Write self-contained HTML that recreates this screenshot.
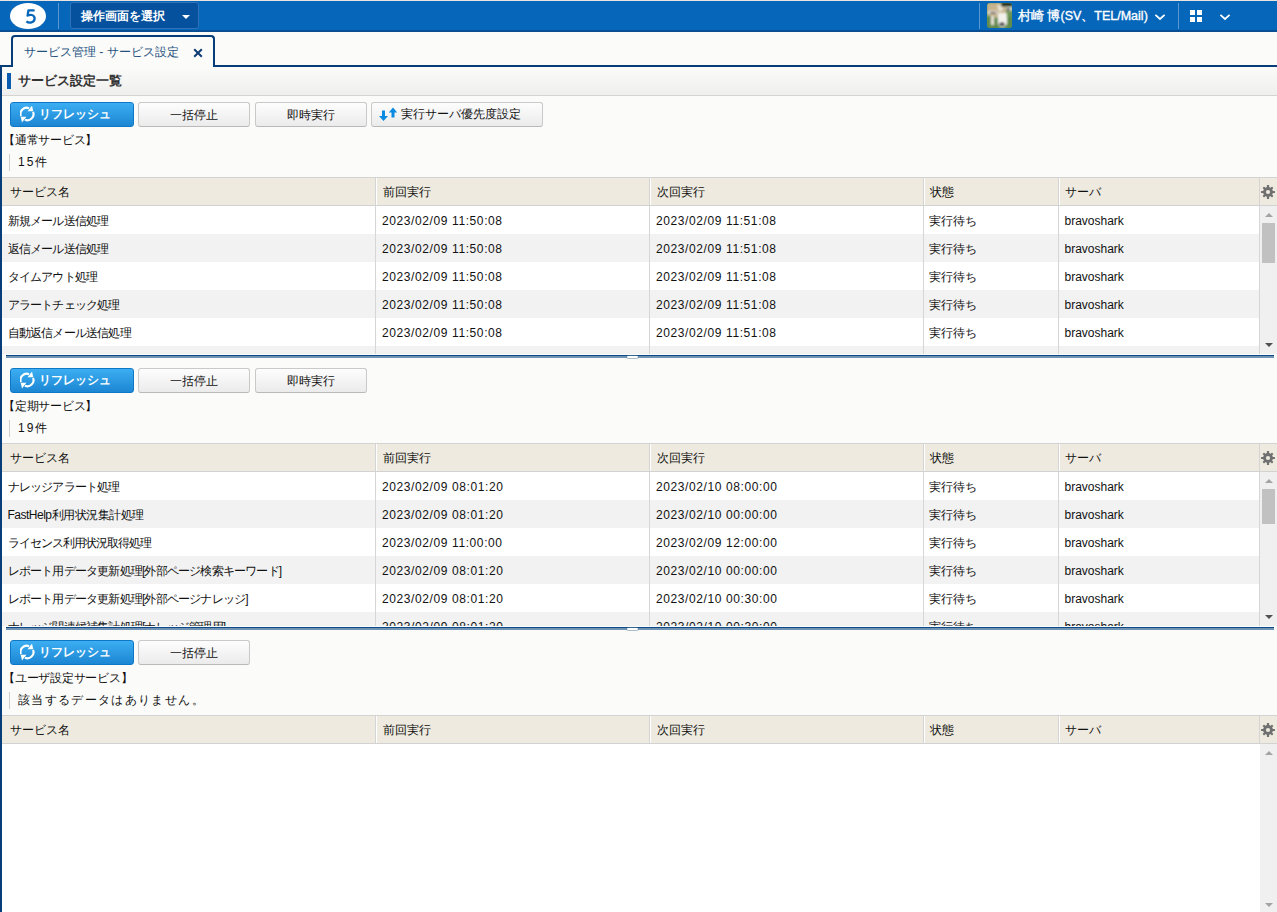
<!DOCTYPE html>
<html><head><meta charset="utf-8">
<style>
*{box-sizing:border-box;margin:0;padding:0}
html,body{width:1277px;height:912px;overflow:hidden}
body{font-family:"Liberation Sans",sans-serif;font-size:12px;color:#222;background:#fbfbf9;position:relative}
.a{position:absolute}
#hdr{left:0;top:0;width:1277px;height:32px;background:#0566ba;border-top:1px solid #e9e4e0;border-bottom:2px solid #0a4f94}
#logo{left:10px;top:3px;width:36px;height:26px;border-radius:50%;background:#fff}
.vsep{top:3px;width:1px;height:26px;background:#5b98d3}
#sel{left:70px;top:2px;width:129px;height:27px;background:#05519d;border:1px solid #2f72b8;border-radius:3px;color:#fff;font-weight:bold;font-size:12px;line-height:27px;padding-left:10px}
#tab{left:11px;top:35px;width:204px;height:32px;border:2px solid #073d79;border-bottom:none;border-radius:4px 4px 0 0;background:#fbfbf9;color:#24507f;font-size:12px;line-height:31px;padding-left:11px}
#tabline{left:0;top:65px;width:1277px;height:2px;background:#073d79}
#tabgap{left:13px;top:65px;width:200px;height:2px;background:#fbfbf9}
#lborder{left:0;top:65px;width:2px;height:847px;background:#073d79}
#title{left:2px;top:67px;width:1275px;height:29px;background:linear-gradient(#fbfbf9,#efefed);border-bottom:1px solid #d3d3d3}
#titlebar{left:7px;top:73px;width:4px;height:16px;background:#0a5cb0}
#titletxt{left:18px;top:73px;font-weight:bold;font-size:13px;color:#333;line-height:16px}
.btn{position:absolute;height:25px;border:1px solid #c9c9c9;border-bottom-color:#b9b9b9;border-radius:3px;background:linear-gradient(#fdfdfd,#ebebeb);text-align:center;line-height:24px;font-size:12px;color:#111}
.btnb{position:absolute;left:10px;width:124px;height:25px;border:1px solid #0f78c6;border-radius:3px;background:linear-gradient(#3caef2,#1c86d3);color:#fff;font-weight:bold;font-size:12px;line-height:23px;padding-left:28px}
.btnb svg{position:absolute;left:9px;top:3px}
.lbl{position:absolute;left:3px;letter-spacing:-.25px;font-size:12px;color:#111;line-height:14px;white-space:nowrap}
.cnt{position:absolute;left:9px;border-left:1px solid #cfcfcf;padding-left:8px;font-size:12px;color:#111;line-height:17px;height:17px;white-space:nowrap}
.th{position:absolute;left:2px;width:1275px;height:29px;background:#eeeadf;border-top:1px solid #d2d2d2;border-bottom:1px solid #d2d2d2}
.th span{position:absolute;top:0;line-height:28px;color:#111;white-space:nowrap}
.hd{position:absolute;top:0;width:1px;height:27px;background:#d4d4d4;border-right:1px solid #fff;box-sizing:content-box}
.bd{position:absolute;width:1px;background:#d6d6d6}
.rows{position:absolute;left:2px;width:1258px;overflow:hidden}
.row{position:absolute;left:0;width:1258px;height:28px;line-height:31px;color:#111;white-space:nowrap}
.row.g{background:#f2f2f2}
.row.w{background:#fff}
.row span{position:absolute;top:0}
.dt{letter-spacing:.6px}
.nm{letter-spacing:-.8px}
.sb{position:absolute;left:1260px;width:17px;background:#f0f0f0}
.sbt{position:absolute;left:1262px;width:13px;background:#c1c1c1}
.au{position:absolute;left:1265px;width:0;height:0;border-left:4px solid transparent;border-right:4px solid transparent;border-bottom:4px solid #a3a3a3}
.ad{position:absolute;left:1265px;width:0;height:0;border-left:4px solid transparent;border-right:4px solid transparent;border-top:4px solid #505050}
.split{position:absolute;left:6px;width:1268px;height:3px;background:#7393b5;border-top:1px solid #0b4a87}
.grip{position:absolute;left:627px;width:11px;height:2px;background:#fff;border-radius:1px;box-shadow:0 0 0 .5px #5d7c9c}
.gear{position:absolute;left:1261px}
</style></head><body>
<div id="hdr" class="a"></div>
<div id="logo" class="a"></div>
<svg class="a" style="left:0;top:0" width="50" height="32" viewBox="0 0 50 32"><path d="M34.6 10.4H28.4L27.6 15.6C29.8 14.3 34.6 14.3 34.6 18.6C34.6 22.9 29 23.5 26.4 21.3" fill="none" stroke="#0566ba" stroke-width="2.3" stroke-linejoin="round"/></svg>
<div class="a vsep" style="left:58px"></div>
<div id="sel" class="a">操作画面を選択<div class="a" style="left:111px;top:12px;width:0;height:0;border-left:4px solid transparent;border-right:4px solid transparent;border-top:4px solid #fff"></div></div>
<div class="a vsep" style="left:979px"></div>
<svg class="a" style="left:987px;top:3px" width="25" height="25" viewBox="0 0 25 25"><defs><clipPath id="av"><rect width="25" height="25" rx="3"/></clipPath><filter id="bl" x="-10%" y="-10%" width="120%" height="120%"><feGaussianBlur stdDeviation="0.9"/></filter></defs><g clip-path="url(#av)"><rect width="25" height="25" fill="#6f9456"/><g filter="url(#bl)"><rect x="0" y="14" width="25" height="11" fill="#5f8a4a"/><path d="M0 0H19V13L10 15L3 13L0 12Z" fill="#c7b38d"/><path d="M10 2H16V7L12 9Z" fill="#e9e3d2"/><rect x="14" y="0" width="11" height="3.5" fill="#1f2a1c"/><path d="M19 4H25V8H20Z" fill="#e7e7e2"/><rect x="20" y="5" width="3" height="2.4" fill="#2a1e1a"/><rect x="1" y="8" width="9" height="3" fill="#e8e6e0"/><rect x="3" y="9" width="6" height="1.5" fill="#3a2a22"/><rect x="4" y="13" width="3" height="9" fill="#e6e1d6"/><path d="M11 10H20V21L17 24H13L11 21Z" fill="#f2f1ec"/><rect x="12.5" y="19.5" width="5" height="3.5" rx="1.5" fill="#15141a"/></g></g></svg>
<div class="a" style="left:1018px;top:2px;line-height:29px;color:#fff;font-size:12.5px;-webkit-text-stroke:.35px #fff;white-space:nowrap">村崎 博(SV、TEL/Mail)</div>
<svg class="a" style="left:1154px;top:13px" width="12" height="8" viewBox="0 0 12 8"><path d="M1.4 1.8L6 6L10.6 1.8" fill="none" stroke="#fff" stroke-width="1.7"/></svg>
<div class="a vsep" style="left:1178px"></div>
<div class="a" style="left:1190px;top:10px;width:5px;height:5px;background:#fff"></div><div class="a" style="left:1197px;top:10px;width:5px;height:5px;background:#fff"></div><div class="a" style="left:1190px;top:17px;width:5px;height:5px;background:#fff"></div><div class="a" style="left:1197px;top:17px;width:5px;height:5px;background:#fff"></div>
<svg class="a" style="left:1219px;top:13px" width="12" height="8" viewBox="0 0 12 8"><path d="M1.4 1.8L6 6L10.6 1.8" fill="none" stroke="#fff" stroke-width="1.7"/></svg>
<div id="tabline" class="a"></div>
<div id="lborder" class="a"></div>
<div id="tab" class="a">サービス管理 - サービス設定<svg class="a" style="left:180px;top:10.5px" width="10" height="10" viewBox="0 0 10 10"><path d="M1.2 1.2L8.8 8.8M8.8 1.2L1.2 8.8" stroke="#0f3d73" stroke-width="2"/></svg></div>
<div id="tabgap" class="a"></div>
<div id="title" class="a"></div>
<div id="titlebar" class="a"></div>
<div id="titletxt" class="a">サービス設定一覧</div>
<div class="btnb" style="top:102px"><svg width="16" height="17" viewBox="20 106 16 17"><g fill="none" stroke="#fff" stroke-width="2.1"><path d="M20.9 116.1A6.2 6.2 0 0 1 29.1 108.2"/><path d="M33.1 111.9A6.2 6.2 0 0 1 24.9 119.8"/></g><g fill="#fff"><path d="M27.6 111.2H33.3L32 105.6Z"/><path d="M26.4 116.8H20.7L22 122.4Z"/></g></svg>リフレッシュ</div>
<div class="btn" style="left:138px;top:102px;width:112px">一括停止</div>
<div class="btn" style="left:255px;top:102px;width:112px">即時実行</div>
<div class="btn" style="left:371px;top:102px;width:172px"><svg class="a" style="left:7px;top:4px" width="19" height="15" viewBox="0 0 19 15"><path d="M3 3.5H6V9H9L4.5 14L0 9H3Z" fill="#0a8ae0"/><path d="M14 0.6L18.2 5.5H15.5V10.6H12.5V5.5H9.8Z" fill="#0a8ae0"/></svg><span style="padding-left:8px;position:relative;top:-1px">実行サーバ優先度設定</span></div>
<div class="lbl" style="top:133px">【通常サービス】</div>
<div class="cnt" style="top:154px"><span style="letter-spacing:2px">15</span>件</div>
<div class="th" style="top:177px"><span style="left:8px">サービス名</span><span style="left:381px">前回実行</span><span style="left:655px">次回実行</span><span style="left:928px">状態</span><span style="left:1063px">サーバ</span><div class="hd" style="left:373px"></div><div class="hd" style="left:647px"></div><div class="hd" style="left:921px"></div><div class="hd" style="left:1056px"></div><div class="hd" style="left:1257px;border-right:none"></div><div class="gear" style="left:1258px;top:6px"><svg width="16" height="16" viewBox="0 0 16 16"><g fill="#707070"><circle cx="8" cy="8" r="4.9"/><rect x="6.9" y="1" width="2.2" height="14" rx=".5"/><rect x="1" y="6.9" width="14" height="2.2" rx=".5"/><rect x="6.9" y="1.3" width="2.2" height="13.4" rx=".8" transform="rotate(45 8 8)"/><rect x="6.9" y="1.3" width="2.2" height="13.4" rx=".8" transform="rotate(-45 8 8)"/></g><circle cx="8" cy="8" r="2.1" fill="#eeeadf"/></svg></div></div>
<div class="rows" style="top:206px;height:148px;background:#fff"><div class="row w" style="top:0px"><span class="nm" style="left:5.5px">新規メール送信処理</span><span class="dt" style="left:380px">2023/02/09 11:50:08</span><span class="dt" style="left:654px">2023/02/09 11:51:08</span><span style="left:926.5px">実行待ち</span><span style="left:1062.5px">bravoshark</span></div><div class="row g" style="top:28px"><span class="nm" style="left:5.5px">返信メール送信処理</span><span class="dt" style="left:380px">2023/02/09 11:50:08</span><span class="dt" style="left:654px">2023/02/09 11:51:08</span><span style="left:926.5px">実行待ち</span><span style="left:1062.5px">bravoshark</span></div><div class="row w" style="top:56px"><span class="nm" style="left:5.5px">タイムアウト処理</span><span class="dt" style="left:380px">2023/02/09 11:50:08</span><span class="dt" style="left:654px">2023/02/09 11:51:08</span><span style="left:926.5px">実行待ち</span><span style="left:1062.5px">bravoshark</span></div><div class="row g" style="top:84px"><span class="nm" style="left:5.5px">アラートチェック処理</span><span class="dt" style="left:380px">2023/02/09 11:50:08</span><span class="dt" style="left:654px">2023/02/09 11:51:08</span><span style="left:926.5px">実行待ち</span><span style="left:1062.5px">bravoshark</span></div><div class="row w" style="top:112px"><span class="nm" style="left:5.5px">自動返信メール送信処理</span><span class="dt" style="left:380px">2023/02/09 11:50:08</span><span class="dt" style="left:654px">2023/02/09 11:51:08</span><span style="left:926.5px">実行待ち</span><span style="left:1062.5px">bravoshark</span></div><div class="row g" style="top:140px"><span class="nm" style="left:5.5px">メール受信処理</span><span class="dt" style="left:380px">2023/02/09 11:50:08</span><span class="dt" style="left:654px">2023/02/09 11:51:08</span><span style="left:926.5px">実行待ち</span><span style="left:1062.5px">bravoshark</span></div></div>
<div class="bd" style="left:375px;top:206px;height:148px"></div>
<div class="bd" style="left:649px;top:206px;height:148px"></div>
<div class="bd" style="left:923px;top:206px;height:148px"></div>
<div class="bd" style="left:1058px;top:206px;height:148px"></div>
<div class="bd" style="left:1259px;top:206px;height:148px"></div>
<div class="sb" style="top:206px;height:148px"></div>
<div class="au" style="top:213px"></div><div class="sbt" style="top:223px;height:40px"></div><div class="ad" style="top:343px"></div>
<div class="split" style="top:355px"></div><div class="grip" style="top:356px"></div>
<div class="btnb" style="top:368px"><svg width="16" height="17" viewBox="20 106 16 17"><g fill="none" stroke="#fff" stroke-width="2.1"><path d="M20.9 116.1A6.2 6.2 0 0 1 29.1 108.2"/><path d="M33.1 111.9A6.2 6.2 0 0 1 24.9 119.8"/></g><g fill="#fff"><path d="M27.6 111.2H33.3L32 105.6Z"/><path d="M26.4 116.8H20.7L22 122.4Z"/></g></svg>リフレッシュ</div>
<div class="btn" style="left:138px;top:368px;width:112px">一括停止</div>
<div class="btn" style="left:255px;top:368px;width:112px">即時実行</div>
<div class="lbl" style="top:399px">【定期サービス】</div>
<div class="cnt" style="top:420px"><span style="letter-spacing:2px">19</span>件</div>
<div class="th" style="top:443px"><span style="left:8px">サービス名</span><span style="left:381px">前回実行</span><span style="left:655px">次回実行</span><span style="left:928px">状態</span><span style="left:1063px">サーバ</span><div class="hd" style="left:373px"></div><div class="hd" style="left:647px"></div><div class="hd" style="left:921px"></div><div class="hd" style="left:1056px"></div><div class="hd" style="left:1257px;border-right:none"></div><div class="gear" style="left:1258px;top:6px"><svg width="16" height="16" viewBox="0 0 16 16"><g fill="#707070"><circle cx="8" cy="8" r="4.9"/><rect x="6.9" y="1" width="2.2" height="14" rx=".5"/><rect x="1" y="6.9" width="14" height="2.2" rx=".5"/><rect x="6.9" y="1.3" width="2.2" height="13.4" rx=".8" transform="rotate(45 8 8)"/><rect x="6.9" y="1.3" width="2.2" height="13.4" rx=".8" transform="rotate(-45 8 8)"/></g><circle cx="8" cy="8" r="2.1" fill="#eeeadf"/></svg></div></div>
<div class="rows" style="top:472px;height:154px;background:#fff"><div class="row w" style="top:0px"><span class="nm" style="left:5.5px">ナレッジアラート処理</span><span class="dt" style="left:380px">2023/02/09 08:01:20</span><span class="dt" style="left:654px">2023/02/10 08:00:00</span><span style="left:926.5px">実行待ち</span><span style="left:1062.5px">bravoshark</span></div><div class="row g" style="top:28px"><span class="nm" style="letter-spacing:-.5px;left:5.5px">FastHelp利用状況集計処理</span><span class="dt" style="left:380px">2023/02/09 08:01:20</span><span class="dt" style="left:654px">2023/02/10 00:00:00</span><span style="left:926.5px">実行待ち</span><span style="left:1062.5px">bravoshark</span></div><div class="row w" style="top:56px"><span class="nm" style="letter-spacing:-.95px;left:5.5px">ライセンス利用状況取得処理</span><span class="dt" style="left:380px">2023/02/09 11:00:00</span><span class="dt" style="left:654px">2023/02/09 12:00:00</span><span style="left:926.5px">実行待ち</span><span style="left:1062.5px">bravoshark</span></div><div class="row g" style="top:84px"><span class="nm" style="left:5.5px">レポート用データ更新処理[外部ページ検索キーワード]</span><span class="dt" style="left:380px">2023/02/09 08:01:20</span><span class="dt" style="left:654px">2023/02/10 00:00:00</span><span style="left:926.5px">実行待ち</span><span style="left:1062.5px">bravoshark</span></div><div class="row w" style="top:112px"><span class="nm" style="left:5.5px">レポート用データ更新処理[外部ページナレッジ]</span><span class="dt" style="left:380px">2023/02/09 08:01:20</span><span class="dt" style="left:654px">2023/02/10 00:30:00</span><span style="left:926.5px">実行待ち</span><span style="left:1062.5px">bravoshark</span></div><div class="row g" style="top:140px"><span class="nm" style="left:5.5px">ナレッジ関連候補集計処理[ナレッジ管理用]</span><span class="dt" style="left:380px">2023/02/09 08:01:20</span><span class="dt" style="left:654px">2023/02/10 00:30:00</span><span style="left:926.5px">実行待ち</span><span style="left:1062.5px">bravoshark</span></div></div>
<div class="bd" style="left:375px;top:472px;height:154px"></div>
<div class="bd" style="left:649px;top:472px;height:154px"></div>
<div class="bd" style="left:923px;top:472px;height:154px"></div>
<div class="bd" style="left:1058px;top:472px;height:154px"></div>
<div class="bd" style="left:1259px;top:472px;height:154px"></div>
<div class="sb" style="top:472px;height:154px"></div>
<div class="au" style="top:479px"></div><div class="sbt" style="top:489px;height:35px"></div><div class="ad" style="top:615px"></div>
<div class="split" style="top:627px"></div><div class="grip" style="top:628px"></div>
<div class="btnb" style="top:640px"><svg width="16" height="17" viewBox="20 106 16 17"><g fill="none" stroke="#fff" stroke-width="2.1"><path d="M20.9 116.1A6.2 6.2 0 0 1 29.1 108.2"/><path d="M33.1 111.9A6.2 6.2 0 0 1 24.9 119.8"/></g><g fill="#fff"><path d="M27.6 111.2H33.3L32 105.6Z"/><path d="M26.4 116.8H20.7L22 122.4Z"/></g></svg>リフレッシュ</div>
<div class="btn" style="left:138px;top:640px;width:112px">一括停止</div>
<div class="lbl" style="top:671px">【ユーザ設定サービス】</div>
<div class="cnt" style="top:692px"><span style="letter-spacing:1.35px">該当するデータはありません。</span></div>
<div class="th" style="top:715px"><span style="left:8px">サービス名</span><span style="left:381px">前回実行</span><span style="left:655px">次回実行</span><span style="left:928px">状態</span><span style="left:1063px">サーバ</span><div class="hd" style="left:373px"></div><div class="hd" style="left:647px"></div><div class="hd" style="left:921px"></div><div class="hd" style="left:1056px"></div><div class="hd" style="left:1257px;border-right:none"></div><div class="gear" style="left:1258px;top:6px"><svg width="16" height="16" viewBox="0 0 16 16"><g fill="#707070"><circle cx="8" cy="8" r="4.9"/><rect x="6.9" y="1" width="2.2" height="14" rx=".5"/><rect x="1" y="6.9" width="14" height="2.2" rx=".5"/><rect x="6.9" y="1.3" width="2.2" height="13.4" rx=".8" transform="rotate(45 8 8)"/><rect x="6.9" y="1.3" width="2.2" height="13.4" rx=".8" transform="rotate(-45 8 8)"/></g><circle cx="8" cy="8" r="2.1" fill="#eeeadf"/></svg></div></div>
<div class="rows" style="top:744px;height:168px;background:#fff"></div>
<div class="sb" style="top:744px;height:168px"></div>
<div class="au" style="top:751px"></div><div class="au" style="top:903px;border-bottom:none;border-top:4px solid #a3a3a3"></div>
</body></html>
